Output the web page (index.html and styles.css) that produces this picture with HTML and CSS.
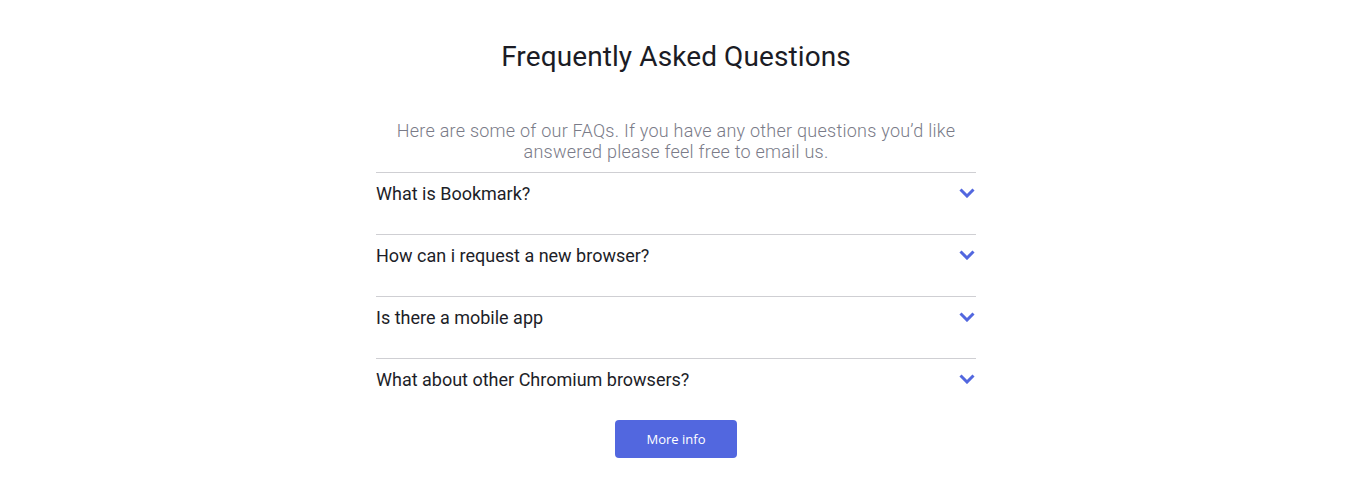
FILE: index.html
```html
<!DOCTYPE html>
<html lang="en">
<head>
<meta charset="utf-8">
<title>FAQ</title>
<link rel="stylesheet" href="styles.css">
</head>
<body>
<section class="faq">
  <h1 class="faq-title">Frequently Asked Questions</h1>
  <p class="faq-intro">Here are some of our FAQs. If you have any other questions you’d like answered please feel free to email us.</p>
  <ul class="faq-list">
    <li class="faq-item"><span>What is Bookmark?</span><svg class="chev" width="16" height="10" viewBox="0 0 16 10"><path d="M1.5 1.5l6.5 6.5 6.5-6.5" fill="none" stroke="#5267df" stroke-width="3"/></svg></li>
    <li class="faq-item"><span>How can i request a new browser?</span><svg class="chev" width="16" height="10" viewBox="0 0 16 10"><path d="M1.5 1.5l6.5 6.5 6.5-6.5" fill="none" stroke="#5267df" stroke-width="3"/></svg></li>
    <li class="faq-item"><span>Is there a mobile app</span><svg class="chev" width="16" height="10" viewBox="0 0 16 10"><path d="M1.5 1.5l6.5 6.5 6.5-6.5" fill="none" stroke="#5267df" stroke-width="3"/></svg></li>
    <li class="faq-item"><span>What about other Chromium browsers?</span><svg class="chev" width="16" height="10" viewBox="0 0 16 10"><path d="M1.5 1.5l6.5 6.5 6.5-6.5" fill="none" stroke="#5267df" stroke-width="3"/></svg></li>
  </ul>
  <button class="more-btn" type="button">More info</button>
</section>
</body>
</html>
```

FILE: styles.css
```css
* { box-sizing: border-box; }
body {
  margin: 0;
  padding-right: 3px;
  background: #fff;
  font-family: Roboto, "Liberation Sans", sans-serif;
}
.faq {
  width: 600px;
  margin: 0 auto;
  padding-top: 41px;
  display: flex;
  flex-direction: column;
  align-items: center;
}
.faq-title {
  margin: 0;
  font-size: 28px;
  line-height: 32px;
  font-weight: 400;
  color: #1b1c25;
  letter-spacing: 0.1px;
}
.faq-intro {
  margin: 47px 0 10px;
  width: 100%;
  text-align: center;
  font-size: 18px;
  line-height: 21px;
  font-weight: 300;
  color: #7a7b88;
  letter-spacing: 0.25px;
  padding: 0 10px;
}
.faq-list {
  list-style: none;
  margin: 0;
  padding: 0;
  width: 100%;
}
.faq-item {
  border-top: 1px solid #cfcfd3;
  padding: 10px 1px 29px 0;
  display: flex;
  justify-content: space-between;
  align-items: center;
  font-size: 18px;
  line-height: 22px;
  font-weight: 400;
  color: #1d1e28;
}
.chev { display: block; margin-top: -2px; }
.more-btn {
  width: 122px;
  height: 38px;
  border: 0;
  border-radius: 4px;
  background: #5267df;
  color: #fff;
  font-family: "Open Sans", sans-serif;
  font-size: 13px;
}
```
